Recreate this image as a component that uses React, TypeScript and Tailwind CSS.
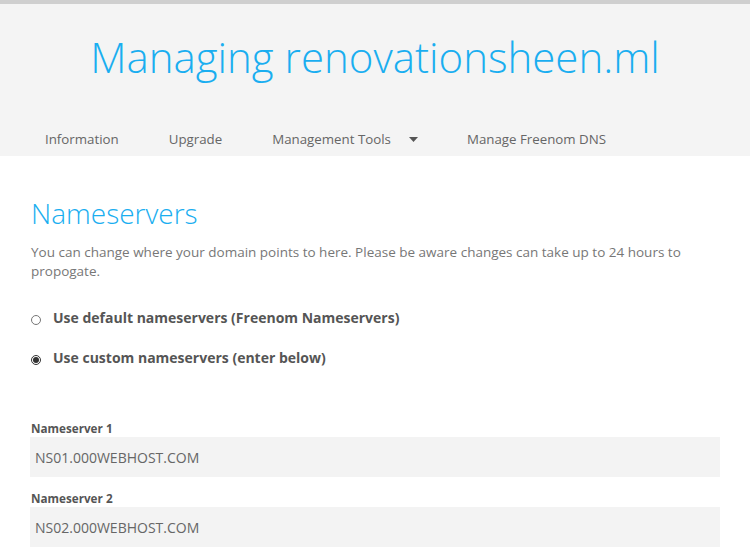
import { useState } from "react";

export default function App() {
  const [mode, setMode] = useState("custom");
  const nav = ["Information", "Upgrade", "Management Tools", "Manage Freenom DNS"];

  return (
    <div className="min-h-[558px] bg-white font-['Open_Sans',sans-serif] text-[#666]">
      <div className="h-[4px] bg-[#cfcfcf]" />
      {/* Header */}
      <header className="bg-[#f4f4f4] h-[152px] flex flex-col">
        <h1 className="text-center text-[42px] font-light leading-none text-[#1aaef0] pt-[32px]">
          Managing renovationsheen.ml
        </h1>
        <nav className="flex items-center mt-auto h-[32px] pl-[45px] text-[13.3px] text-[#666]">
          {nav.map((item) => (
            <div key={item} className="flex items-center mr-[50px]">
              <span>{item}</span>
              {item === "Management Tools" && (
                <svg className="ml-[18px] mr-[-1px]" width="9" height="6" viewBox="0 0 9 6">
                  <path d="M0 0 H9 L4.5 5 Z" fill="#555" />
                </svg>
              )}
            </div>
          ))}
        </nav>
      </header>

      {/* Content */}
      <main className="pl-[30px] pr-[30px]">
        <h2 className="text-[28px] font-light text-[#1aaef0] leading-none pt-[43px] pl-[1px]">Nameservers</h2>
        <p className="text-[13.5px] leading-[19px] text-[#777] mt-[16px] pl-[1px]">
          You can change where your domain points to here. Please be aware changes can take up to 24 hours to
          propogate.
        </p>

        <div className="mt-[26px] flex flex-col gap-[20px] pl-[1px]">
          {[
            { id: "default", label: "Use default nameservers (Freenom Nameservers)" },
            { id: "custom", label: "Use custom nameservers (enter below)" },
          ].map((r) => (
            <label key={r.id} className="flex items-center h-[20px]">
              <input
                type="radio"
                name="ns"
                checked={mode === r.id}
                onChange={() => setMode(r.id)}
                className="w-[10px] h-[10px] mt-[5px] mr-[12px] accent-[#333]"
              />
              <span className="text-[14px] font-bold text-[#555]">{r.label}</span>
            </label>
          ))}
        </div>

        <div className="mt-[53px] flex flex-col gap-[13px]">
          {["NS01.000WEBHOST.COM", "NS02.000WEBHOST.COM"].map((v, i) => (
            <div key={v}>
              <div className="text-[11.7px] font-bold text-[#555] leading-[16px] pl-[1px]">Nameserver {i + 1}</div>
              <input
                readOnly
                value={v}
                className="mt-[1px] w-full h-[40px] bg-[#f3f3f3] px-[5px] text-[14px] text-[#666] outline-none"
              />
            </div>
          ))}
        </div>
      </main>
    </div>
  );
}
